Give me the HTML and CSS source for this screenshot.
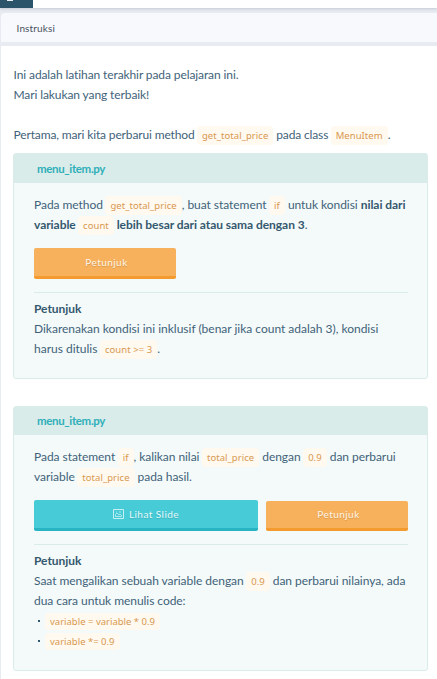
FILE: index.html
```html
<!DOCTYPE html>
<html lang="id">
<head>
<meta charset="utf-8">
<title>Instruksi</title>
<link rel="stylesheet" href="styles.css">
</head>
<body>
<header class="topbar"><div class="brand"><svg width="7" height="2" viewBox="0 0 7 2"><path d="M0 0h6v1H0z" fill="#e8f0f3"/></svg></div></header>
<main class="panel">
  <h1 class="panel-title">Instruksi</h1>
  <div class="content">
    <p class="intro">Ini adalah latihan terakhir pada pelajaran ini.<br>Mari lakukan yang terbaik!</p>
    <p class="lead">Pertama, mari kita perbarui method <code>get_total_price</code> pada class <code>MenuItem</code>.</p>
    <section class="card first">
      <h2>menu_item.py</h2>
      <div class="card-body">
        <p>Pada method <code>get_total_price</code>, buat statement <code>if</code> untuk kondisi <b>nilai dari<br>variable <code>count</code> lebih besar dari atau sama dengan 3</b>.</p>
        <div class="actions"><button class="btn hint">Petunjuk</button></div>
        <div class="tip">
          <h3>Petunjuk</h3>
          <p class="wide">Dikarenakan kondisi ini inklusif (benar jika count adalah 3), kondisi<br>harus ditulis <code>count &gt;= 3</code>.</p>
        </div>
      </div>
    </section>
    <section class="card second">
      <h2>menu_item.py</h2>
      <div class="card-body">
        <p>Pada statement <code>if</code>, kalikan nilai <code>total_price</code> dengan <code>0.9</code> dan perbarui<br>variable <code>total_price</code> pada hasil.</p>
        <div class="actions">
          <button class="btn slide"><svg width="11" height="10" viewBox="0 0 11 10" fill="none" stroke="currentColor" opacity=".8"><path d="M.5.5h10v9H.5z"/><path d="M2.500 7.500v-2l1.500-1.500 2 2 1-1 1.500 1.500v1zM3 3h1M6 3h2" stroke-width=".8"/></svg>Lihat Slide</button>
          <button class="btn hint">Petunjuk</button>
        </div>
        <div class="tip">
          <h3>Petunjuk</h3>
          <p>Saat mengalikan sebuah variable dengan <code>0.9</code> dan perbarui nilainya, ada<br>dua cara untuk menulis code:</p>
          <ul>
            <li><code>variable = variable * 0.9</code></li>
            <li><code>variable *= 0.9</code></li>
          </ul>
        </div>
      </div>
    </section>
  </div>
</main>
</body>
</html>
```
FILE: styles.css
```css
* { box-sizing: border-box; }
body {
  margin: 0;
  height: 679px;
  overflow: hidden;
  background: #e8ebf1;
  color: #3f6279;
  font: 12px/20px Lato, sans-serif;
}
h1, h2, h3, p, ul { margin: 0; padding: 0; }
.topbar {
  height: 8px;
  background: #fff;
  box-shadow: 0 1px 3px rgba(70, 85, 110, .22);
}
.brand {
  display: flex;
  width: 33px;
  height: 8px;
  padding-left: 7px;
  background: #2b546a;
}
.panel { margin: 5px 0 0 1px; }
.panel-title {
  height: 29px;
  padding-left: 15.5px;
  border-top-left-radius: 4px;
  background: #f7f9fd;
  color: #4a5260;
  font-size: 10px;
  font-weight: 400;
  letter-spacing: .15px;
  line-height: 31px;
}
.content {
  height: 633px;
  margin-top: 4px;
  padding: 19px 9px 0 12px;
  background: #fff;
}
p, h2, h3 { white-space: nowrap; }
p { letter-spacing: -.05px; }
.intro { padding-left: .5px; letter-spacing: -.1px; }
.lead { margin-top: 20px; padding-left: .5px; letter-spacing: -.14px; }
.wide { letter-spacing: -.01px; }
code {
  margin-left: -.5px;
  padding: 3px 5px;
  border-radius: 4px;
  background: #fff9ef;
  color: #d89850;
  font: 9.5px/18px "Noto Sans", sans-serif;
  letter-spacing: .05px;
}
.card {
  border: 1px solid #d9ecea;
  border-radius: 3px;
  background: #f4fafa;
}
.first { height: 226px; margin-top: 8px; }
.second { height: 265px; margin-top: 27px; }
.card h2 {
  height: 29px;
  padding-left: 23px;
  background: #d9ecea;
  color: #2fafb9;
  font-size: 11.5px;
  font-weight: 700;
  letter-spacing: -.35px;
  line-height: 29px;
}
.second h2 { height: 28px; line-height: 27px; }
.card-body { padding: 12px 19px 0 20px; }
b, h3 { color: #34586e; font-weight: 700; }
.actions {
  display: flex;
  gap: 8px;
  align-items: flex-end;
  height: 31px;
  margin-top: 13px;
}
.btn {
  display: flex;
  align-items: center;
  justify-content: center;
  gap: 5px;
  height: 31px;
  padding: 0 0 0 3px;
  border: 0;
  border-bottom: 3px solid #f39b2e;
  border-radius: 2px;
  background: #f7b05b;
  color: #fff6e8;
  font: 10px/20px Lato, sans-serif;
  letter-spacing: .45px;
  text-shadow: 0 1px 1px rgba(0, 0, 0, .15);
}
.hint { width: 142px; }
.second .hint { height: 30px; padding-bottom: 1px; }
.slide {
  width: 224px;
  padding-left: 0;
  border-color: #28b4c2;
  background: #47cbd7;
  color: #e6fafb;
}
.tip {
  margin-top: 13px;
  padding-top: 6px;
  border-top: 1px solid #d9ecea;
}
.tip h3 { font-size: 12px; letter-spacing: -.05px; }
ul { list-style: none; }
li {
  display: flex;
  align-items: center;
  height: 20px;
  padding-left: 4px;
}
li::before {
  width: 2px;
  height: 2px;
  margin-right: 5px;
  background: #34586e;
  content: "";
}
li code { margin-left: 0; padding: 0 5px; letter-spacing: 0; line-height: 17px; }
```
